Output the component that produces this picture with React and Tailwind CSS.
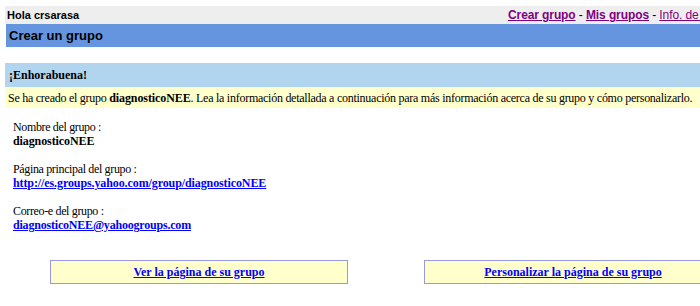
import React from 'react';

const serif = { fontFamily: '"Liberation Serif", "Times New Roman", serif' };
const sans = { fontFamily: '"Liberation Sans", Arial, sans-serif' };

export default function App() {
  return (
    <div className="w-[700px] h-[306px] overflow-hidden bg-white">
      <div className="w-[780px] pl-[5px] pt-[6px]">
        {/* top bar */}
        <div className="flex items-center h-[18px] bg-[#eeeeee] text-black" style={sans}>
          <div className="w-[503px] pl-[2px] text-[11px] font-bold">Hola crsarasa</div>
          <div className="text-[12px] tracking-[-0.1px] whitespace-nowrap">
            <a href="#" className="font-bold text-[#800080] underline">Crear grupo</a>
            {' - '}
            <a href="#" className="font-bold text-[#800080] underline">Mis grupos</a>
            {' - '}
            <a href="#" className="text-[#800080] underline">Info. de cuenta</a>
          </div>
        </div>

        <div className="h-[23px] ml-[1px] bg-[#6595de] flex items-center pl-[3px]" style={sans}>
          <h1 className="text-[13px] font-bold text-black">Crear un grupo</h1>
        </div>

        {/* success message */}
        <div className="mt-[16px] h-[24px] bg-[#b2d5ef] flex items-center pl-[4px]" style={serif}>
          <span className="text-[12px] font-bold text-black">¡Enhorabuena!</span>
        </div>
        <div className="h-[21px] bg-[#ffffcc] flex items-center pl-[3px] whitespace-nowrap" style={serif}>
          <span className="text-[12px] tracking-[-0.26px] text-black">
            Se ha creado el grupo <b className="tracking-[-0.1px]">diagnosticoNEE</b>. Lea la información detallada a continuación para más información acerca de su grupo y cómo personalizarlo.
          </span>
        </div>

        {/* group details */}
        <div className="mt-[12px] pl-[8px] text-[12px] leading-[14px] text-black" style={serif}>
          <div className="tracking-[-0.35px]">Nombre del grupo :</div>
          <div className="font-bold tracking-[-0.1px]">diagnosticoNEE</div>
          <div className="h-[14px]" />
          <div className="tracking-[-0.35px]">Página principal del grupo :</div>
          <a href="#" className="block font-bold tracking-[-0.1px] text-[#0000ff] underline">http://es.groups.yahoo.com/group/diagnosticoNEE</a>
          <div className="h-[14px]" />
          <div className="tracking-[-0.35px]">Correo-e del grupo :</div>
          <a href="#" className="block font-bold tracking-[-0.2px] text-[#0000ff] underline">diagnosticoNEE@yahoogroups.com</a>
        </div>

        {/* actions */}
        <div className="mt-[28px] flex gap-[76px] pl-[45px]" style={serif}>
          <div className="w-[298px] h-[24px] border border-[#9999dd] bg-[#ffffcc] flex items-center justify-center">
            <a href="#" className="text-[12px] font-bold text-[#0000ff] underline">Ver la página de su grupo</a>
          </div>
          <div className="w-[298px] h-[24px] border border-[#9999dd] bg-[#ffffcc] flex items-center justify-center">
            <a href="#" className="text-[12px] font-bold text-[#0000ff] underline">Personalizar la página de su grupo</a>
          </div>
        </div>
      </div>
    </div>
  );
}
